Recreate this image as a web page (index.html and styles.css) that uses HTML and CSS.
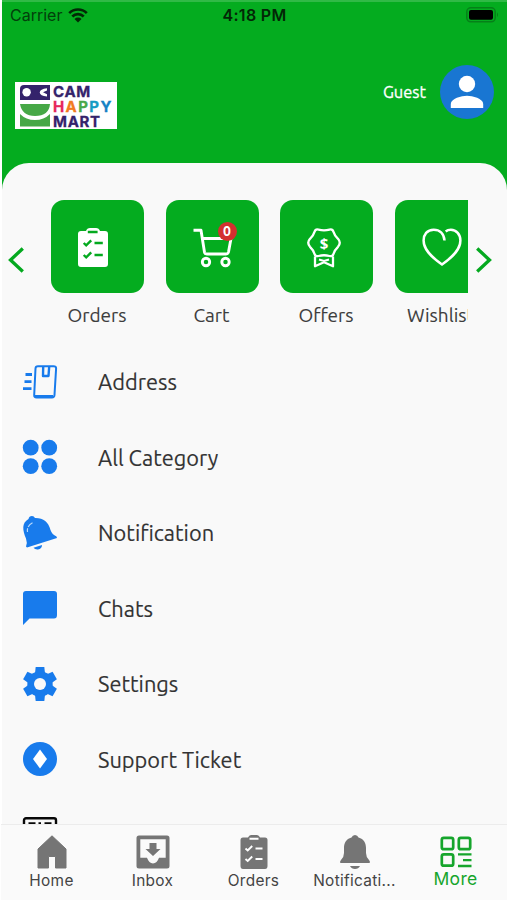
FILE: index.html
```html
<!DOCTYPE html>
<html lang="en">
<head>
<meta charset="utf-8">
<meta name="viewport" content="width=device-width, initial-scale=1">
<title>Cam Happy Mart</title>
<link rel="stylesheet" href="styles.css">
</head>
<body>
<div class="app">
  <header class="hero">
    <div class="status">
      <div class="carrier"><span>Carrier</span>
        <svg width="20" height="15" viewBox="0 0 20 15"><path d="M1.200 5.200a12.400 12.400 0 0 1 17.600 0M4.300 8.500a8 8 0 0 1 11.400 0" fill="none" stroke="#032706" stroke-width="2.600"/><path d="M6.500 11a5 5 0 0 1 7 0L10 14.500z" fill="#032706"/></svg>
      </div>
      <time class="clock">4:18 PM</time>
      <svg class="battery" width="33" height="16" viewBox="0 0 33 16"><rect x=".8" y=".8" width="28.400" height="14" rx="4" fill="none" stroke="#068019" stroke-width="1.500"/><rect x="3" y="3" width="24" height="9.800" rx="2" fill="#000"/><path d="M31 5.400q2 2.200 0 4.600z" fill="#068019"/></svg>
    </div>
    <div class="brandbar">
      <div class="logo">
        <svg width="30" height="42" viewBox="0 0 30 42"><path d="M4 0h26v15H0V4q0-4 4-4z" fill="#34236b"/><circle cx="6.600" cy="7.300" r="4.200" fill="#fff"/><path d="M27 3.200v2.300l-4 1.800 4 1.900v2.200q-7-.7-7.300-4 .3-3.500 7.300-4.200z" fill="#fff"/><path d="M0 19h30q-1 12-15 12Q2 31 0 19zM0 29q6 6 15 6t15-6v12.500H0z" fill="#46a846"/></svg>
        <div class="wordmark"><span class="plum">CAM</span><span class="happy"><i class="pink">H</i><i class="orange">A</i><i class="lime">P</i><i class="teal">P</i><i class="blue">Y</i></span><span class="plum">MART</span></div>
      </div>
      <div class="profile"><span class="guest">Guest</span>
        <svg width="54" height="54" viewBox="0 0 54 54"><circle cx="27" cy="27" r="27" fill="#1976d2"/><circle cx="27" cy="19" r="8.200" fill="#fff"/><path d="M10.800 43v-4c0-5.400 10.800-8.200 16.200-8.200S43.200 33.600 43.200 39v4z" fill="#fff"/></svg>
      </div>
    </div>
  </header>

  <main class="sheet">
    <section class="shortcuts">
      <svg class="arrow left" width="16" height="26" viewBox="0 0 16 26"><path d="M14.800 1.500L2.500 13l12.300 11.500" fill="none" stroke="#04a91f" stroke-width="3.300"/></svg>
      <div class="track">
        <div class="card"><div class="tile">
          <svg width="30" height="39" viewBox="0 0 30 39"><path d="M3 3h5q1-3 4-3h6q3 0 4 3h5q3 0 3 3v30q0 3-3 3H3q-3 0-3-3V6q0-3 3-3z" fill="#fff"/><path d="M9.800 4h9.800M16.500 15h8.300M16.500 27h8.300M5.700 15l2.500 2.400 5-5M5.700 27l2.500 2.400 5-5" fill="none" stroke="#04a91f" stroke-width="2.400"/></svg>
        </div><span class="label">Orders</span></div>
        <div class="card"><div class="tile">
          <svg width="40" height="41" viewBox="0 0 40 41"><g fill="none" stroke="#fff" stroke-width="2.900" stroke-linejoin="round"><path d="M.5 2.200H8l3.500 22q.4 1.800 2.500 1.800h19q2 0 2.500-2L38 10.500H9.500"/><circle cx="13" cy="34" r="3.700"/><circle cx="32.500" cy="34" r="3.700"/></g></svg>
          <span class="badge">0</span>
        </div><span class="label">Cart</span></div>
        <div class="card"><div class="tile">
          <svg width="34" height="40" viewBox="0 0 34 40"><g fill="none" stroke="#fff" stroke-width="2.300" stroke-linejoin="round"><path d="M11.500 1.600Q17 3 22.500 1.600q3-.8 4 2.200 1.200 4 4.500 7 3.500 4 0 8-3.300 3.200-4.500 7-1 3-4 2.200-5.500-1.500-11 0-3 .8-4-2.200-1.200-3.800-4.500-7-3.500-4 0-8 3.300-3 4.500-7 1-3 4-2.200z"/><path d="M8 28.500v9.800l9-4 9 4v-9.800M12 31.500l5 1.500 5-1.500"/></g><text x="17" y="20.500" class="dollar">$</text></svg>
        </div><span class="label">Offers</span></div>
        <div class="card"><div class="tile">
          <svg width="40" height="39" viewBox="0 0 40 39"><path d="M22.500 12.500c-.5-7-5-10.800-10.800-10.800C5 1.700 1.600 6.700 1.600 12.500 1.600 21 8 28 20 36.500c12-8.500 18.400-15.500 18.400-24 0-6-4-10.800-9.500-10.800-2 0-3.800.5-5.200 1.800" fill="none" stroke="#fff" stroke-width="2.500"/></svg>
        </div><span class="label">Wishlist</span></div>
      </div>
      <svg class="arrow right" width="16" height="26" viewBox="0 0 16 26"><path d="M1.200 1.500L13.500 13 1.200 24.500" fill="none" stroke="#04a91f" stroke-width="3.300"/></svg>
    </section>

    <ul class="menu">
      <li><svg width="34" height="34" viewBox="0 0 34 34"><g fill="none" stroke="#187bec"><path d="M15 1.300h15.500q2.700 0 2.600 2.200L31.500 30q-.2 2.500-2.500 2.500H13.500q-2.500 0-2.300-2.500L12.500 3.500q.1-2.200 2.500-2.200z" stroke-width="2"/><path d="M12 31.500h18" stroke-width="3"/><path d="M20.200 1.500l-.2 9.500h5.500l.7-9.500" stroke-width="2.400" stroke-linejoin="round"/><path d="M2.500 9.500h6.500M1.500 16.600h7M0 23.700h8.500" stroke-width="2.800"/></g></svg><span>Address</span></li>
      <li><svg width="34" height="34" viewBox="0 0 34 34"><g fill="#187bec"><circle cx="7.700" cy="7.700" r="7.900"/><circle cx="26.200" cy="7.700" r="7.900"/><circle cx="7.700" cy="26.200" r="7.900"/><circle cx="26.200" cy="26.200" r="7.900"/></g></svg><span>All Category</span></li>
      <li><svg width="34" height="34" viewBox="0 0 34 34"><path d="M5.500 3Q6 0 9 0q2 0 3 2c8-.3 13.500 4 15.500 12q1.500 4.500 6 6.500l.5 1.500L4 31.500l-1-1q1.500-4 0-8C-.5 14-1.500 7 5.500 3z" fill="#187bec"/><path d="M10.500 31.800l8.500-2.700q0 4-4 4.300-3 .3-4.500-1.600z" fill="#187bec"/><path d="M9.500 6.800Q3.500 10 4.500 16" fill="none" stroke="#b9d9fb" stroke-width="1.200" stroke-dasharray="6 1.500"/></svg><span>Notification</span></li>
      <li><svg width="34" height="34" viewBox="0 0 34 34"><path d="M3 0h28q3 0 3 3v21q0 3.500-3 3.500H6.500L0 34V3q0-3 3-3z" fill="#187bec"/></svg><span>Chats</span></li>
      <li><svg width="34" height="34" viewBox="-17 -17 34 34"><g fill="#187bec"><circle r="12.700"/><path id="cog" d="M-4.300-17h8.600l.7 6v22l-.7 6h-8.600l-.7-6v-22z"/><use href="#cog" transform="rotate(60)"/><use href="#cog" transform="rotate(120)"/></g><circle r="6" fill="#f9f9f9"/></svg><span>Settings</span></li>
      <li><svg width="34" height="34" viewBox="0 0 34 34"><circle cx="17" cy="17" r="17" fill="#187bec"/><path d="M17 7.500l7 9.500-7 9.500-7-9.500z" fill="#fff"/></svg><span>Support Ticket</span></li>
      <li><svg width="34" height="34" viewBox="0 0 34 34"><rect x="1" y="1.200" width="32" height="32" rx="2" fill="none" stroke="#080808" stroke-width="2.400"/><path d="M5.500 6.500h7M15.500 6.500H18M21.500 6.500h7" stroke="#080808" stroke-width="2.400"/></svg></li>
    </ul>
  </main>

  <nav class="tabs">
    <a class="tab"><svg width="34" height="34" viewBox="0 0 34 34"><path d="M17 .8L31 14v19H20.500V21.500h-7V33H3V14z" fill="#757575" stroke="#757575" stroke-linejoin="round"/></svg><span>Home</span></a>
    <a class="tab"><svg width="34" height="34" viewBox="0 0 34 34"><path fill-rule="evenodd" d="M3 .5h28q2.500 0 2.500 2.500v28q0 2.500-2.500 2.500H3Q.5 33.500.5 31V3Q.500.500 3 .500zM4.300 4.300v18.500H11q2 5.700 6 5.700t6-5.700h6.700V4.300zM13.500 8h7v6h4L17 21l-7.500-7h4z" fill="#757575"/></svg><span>Inbox</span></a>
    <a class="tab"><svg width="34" height="34" viewBox="0 0 34 34"><path d="M6 2.500h5Q12 0 14 0h6q2 0 3 2.500h5q2.500 0 2.500 2.500v26q0 3-2.500 3H6q-2.500 0-2.500-3V5q0-2.500 2.500-2.500z" fill="#757575"/><path d="M12.500 3.800h9M18.500 13.500h7M18.500 24h7M8.500 13.500l2.200 2 4.500-4.500M8.500 24l2.200 2 4.500-4.500" fill="none" stroke="#fff" stroke-width="1.900"/></svg><span>Orders</span></a>
    <a class="tab"><svg width="34" height="34" viewBox="0 0 34 34"><path d="M13.500 2.500Q14.500 0 17 0t3.500 2.500C26 4 28 8 28 13v5q0 4 3 7 2 3 0 3H3q-2 0 0-3 3-3 3-7v-5c0-5 2-9 7.500-10.500zM12 31h10q-1.500 3-5 3t-5-3z" fill="#757575"/></svg><span>Notificati...</span></a>
    <a class="tab active"><svg width="34" height="34" viewBox="0 0 34 34"><g fill="none" stroke="#16a52c" stroke-width="2.700"><rect x="2.800" y="2.800" width="11.400" height="11.400" rx="2"/><rect x="19.800" y="2.800" width="11.400" height="11.400" rx="2"/><rect x="2.800" y="19.300" width="11.400" height="11.400" rx="2"/><path d="M19 19.300h13.500M24 25.200h8.500M19 31h13.500" stroke-width="2.300"/></g></svg><span>More</span></a>
  </nav>
</div>
</body>
</html>
```
FILE: styles.css
```css
* { box-sizing: border-box; }
body {
  margin: 0;
  background: #fff;
  color: #333;
  font-family: "Ubuntu", "Noto Sans", sans-serif;
}
svg { display: block; flex: none; overflow: visible; }
.app {
  height: 900px;
  padding-left: 2px;
  display: flex;
  flex-direction: column;
  overflow: hidden;
}

.hero {
  flex: none;
  height: 190px;
  background: #04ac1f;
  border-top: 2px solid #30ba46;
}
.status {
  height: 26px;
  padding: 0 8px;
  display: grid;
  grid-template-columns: 1fr auto 1fr;
  align-items: center;
  font-family: Inter, sans-serif;
  font-size: 16px;
  color: #033f0b;
}
.carrier { display: flex; align-items: center; gap: 6px; }
.clock { font-weight: 600; color: #032706; letter-spacing: .3px; }
.battery { justify-self: end; margin: -1px 0 0; }
.brandbar {
  display: flex;
  justify-content: space-between;
  align-items: flex-start;
  padding: 37px 13px 0;
}
.logo {
  margin-top: 17px;
  width: 102px;
  height: 47px;
  background: #fff;
  display: flex;
  gap: 4px;
  padding: 3px 4px 0 5px;
}
.wordmark {
  display: flex;
  flex-direction: column;
  font: 700 15px/15px Inter, sans-serif;
  margin: -1px 0 0 -1px;
  letter-spacing: .7px;
  -webkit-text-stroke: .3px;
}
.happy { display: flex; letter-spacing: 1.4px; }
.happy i { font-style: normal; }
.plum { color: #34236b; }
.pink { color: #e6285a; }
.orange { color: #f27a20; }
.lime { color: #48a84a; }
.teal { color: #149bc4; }
.blue { color: #1682c5; }
.profile { display: flex; align-items: center; gap: 14px; color: #fff; }
.guest { font-size: 16.5px; -webkit-text-stroke: .3px; }

.sheet {
  flex: 1;
  min-height: 0;
  margin-top: -27px;
  border-radius: 27px 27px 0 0;
  background: #f9f9f9;
  overflow: hidden;
}
.shortcuts {
  height: 181px;
  padding: 37px 15px 0 6px;
  display: flex;
}
.arrow { margin-top: 47px; }
.track {
  width: 417px;
  margin: 0 8px 0 27px;
  display: flex;
  gap: 21.5px;
  overflow: hidden;
}
.card {
  flex: none;
  width: 93px;
  display: flex;
  flex-direction: column;
  align-items: center;
}
.tile {
  position: relative;
  width: 93px;
  height: 93px;
  border-radius: 13px;
  background: #04ac1f;
  padding: 27.5px 0 0 27px;
}
.badge {
  position: absolute;
  left: 52px;
  top: 22px;
  width: 19px;
  height: 19px;
  border-radius: 50%;
  background: #d3302f;
  color: #fff;
  text-align: center;
  font-size: 14px;
  font-weight: 700;
  line-height: 19px;
}
.dollar {
  fill: #fff;
  font: 700 15px "Noto Sans", sans-serif;
  text-anchor: middle;
}
.label { margin: 8px 1px 0 0; font-size: 19px; line-height: 28px; color: #3d3d3d; -webkit-text-stroke: .1px; }

.menu { list-style: none; margin: 0; padding: 0; }
.menu li {
  height: 75.5px;
  padding-left: 21px;
  display: flex;
  align-items: center;
}
.menu span {
  margin: 1px 0 0 41px;
  font-size: 21.8px;
  white-space: nowrap;
  -webkit-text-stroke: .15px;
}
.menu li:last-child { height: 74px; }

.tabs {
  flex: none;
  height: 76px;
  margin-left: -1px;
  border-top: 1px solid #ececec;
  background: #fafafa;
  display: grid;
  grid-template-columns: repeat(5, 101px);
}
.tab {
  display: flex;
  flex-direction: column;
  align-items: center;
  padding-top: 10px;
  font: 15.4px/20px Inter, sans-serif;
  letter-spacing: .3px;
  color: #444;
}
.tab span { margin-top: 2px; white-space: nowrap; }
.active { color: #16a52c; font-size: 17.5px; }
.active span { margin-top: 0; }
```
